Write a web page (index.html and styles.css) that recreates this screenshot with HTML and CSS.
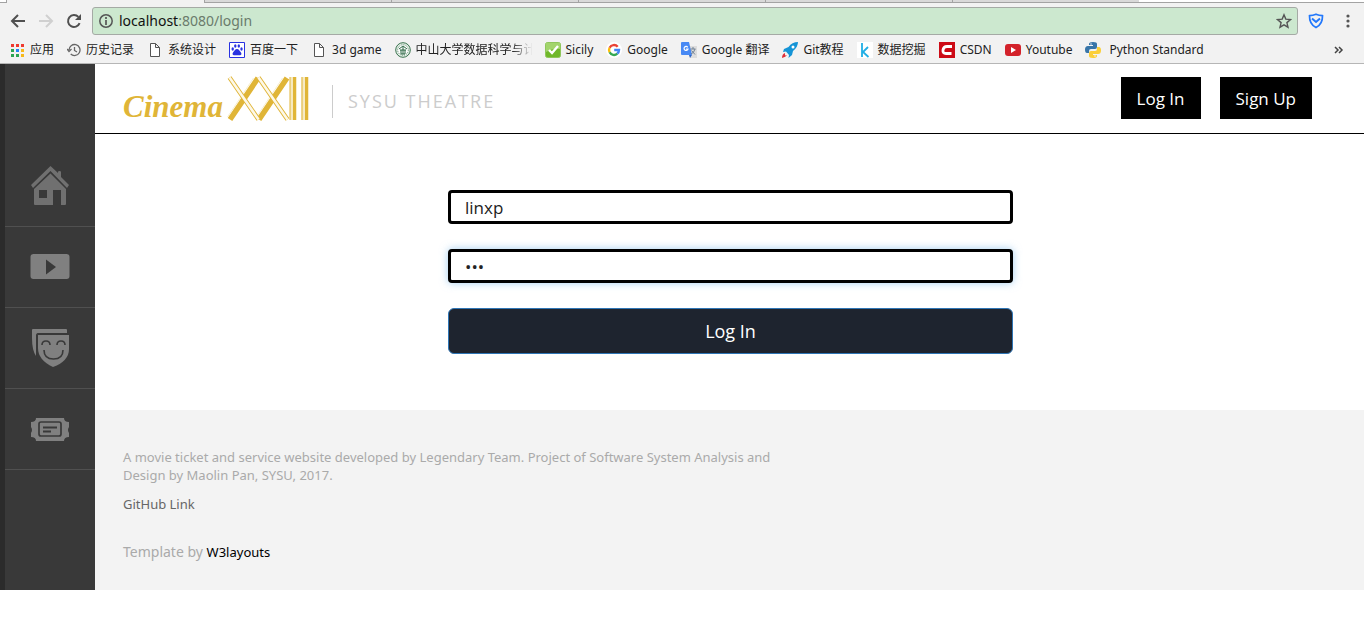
FILE: index.html
```html
<!DOCTYPE html>
<html lang="en">
<head>
<meta charset="utf-8">
<title>Cinema XXII</title>
<link rel="stylesheet" href="styles.css">
</head>
<body>
<div class="browser">
  <div class="tabs"><span class="tab-edge"></span><span class="tab tab-active"></span><span class="tab"></span><span class="tab"></span><span class="tab"></span><span class="tab"></span><span class="tab"></span><span class="tab-rest"></span></div>
  <div class="toolbar">
    <button class="tool" aria-label="Back"><svg width="16" height="16" viewBox="0 0 16 16" fill="none" stroke="#505050" stroke-width="2"><path d="M15 8H2M8 2L2 8l6 6"/></svg></button>
    <button class="tool" aria-label="Forward"><svg width="16" height="16" viewBox="0 0 16 16" fill="none" stroke="#d0d0d0" stroke-width="2"><path d="M1 8h13M8 2l6 6-6 6"/></svg></button>
    <button class="tool" aria-label="Reload"><svg width="16" height="16" viewBox="0 0 16 16"><path d="M13.6 10.2A6 6 0 1 1 12.4 3.9" fill="none" stroke="#505050" stroke-width="2"/><path d="M15 1v6H9z" fill="#505050"/></svg></button>
    <div class="address">
      <svg width="14" height="14" viewBox="0 0 14 14"><circle cx="7" cy="7" r="6.2" fill="none" stroke="#555" stroke-width="1.5"/><path d="M7 6v5M7 3v2" stroke="#555" stroke-width="1.7"/></svg>
      <span class="url"><span class="host">localhost</span>:8080/login</span>
      <svg width="16" height="16" viewBox="0 0 16 16"><path d="M8 1.8l1.8 4.3 4.7.4-3.6 3.1 1.1 4.6L8 11.8l-4 2.4 1.1-4.6L1.500 6.500l4.700-.4z" fill="none" stroke="#555" stroke-width="1.4"/></svg>
    </div>
    <button class="tool shield" aria-label="Shield"><svg width="16" height="16" viewBox="0 0 16 16" fill="none" stroke="#2378fb"><path d="M1.500 2.700Q5 2.500 8 1.200q3 1.300 6.500 1.500.2 8.500-6.500 11.800Q1.300 11.200 1.500 2.700z" stroke-width="1.700"/><path d="M4 5.500L8 9l4-3.500" stroke-width="2"/></svg></button>
    <button class="tool menu" aria-label="Menu"><svg width="16" height="16" viewBox="0 0 16 16" fill="#555"><circle cx="8" cy="3" r="1.600"/><circle cx="8" cy="8" r="1.600"/><circle cx="8" cy="13" r="1.600"/></svg></button>
  </div>
  <nav class="bookmarks" aria-label="Bookmarks">
    <a href="#"><svg width="14" height="14" viewBox="0 0 14 14"><path d="M0 1h3v3H0zM5 1h3v3H5zM10 1h3v3h-3z" fill="#ef3b30"/><path d="M0 6h3v3H0zM0 11h3v3H0zM5 11h3v3H5z" fill="#2da553"/><path d="M5 6h3v3H5z" fill="#2385f8"/><path d="M10 6h3v3h-3zM10 11h3v3h-3z" fill="#f7b91b"/></svg>应用</a>
    <a href="#"><svg width="14" height="14" viewBox="0 0 14 14" fill="none" stroke="#666" stroke-width="1.300"><path d="M2 7a5.500 5.500 0 1 1 1.700 4M0 6l2 2.500L4.500 6M7.500 4v3.500L10 9"/></svg>历史记录</a>
    <a href="#"><svg width="16" height="16" viewBox="0 0 16 16"><path d="M3.500 1.500h5l4 4v9h-9zM8.500 1.500v4h4" fill="#fff" stroke="#555"/></svg>系统设计</a>
    <a href="#"><svg width="16" height="16" viewBox="0 0 16 16"><path d="M.5.500h15v15H.5z" fill="#fff" stroke="#2932e1"/><g fill="#2932e1"><ellipse cx="3.700" cy="7" rx="1.200" ry="1.700"/><ellipse cx="6.300" cy="4" rx="1.200" ry="1.700"/><ellipse cx="9.800" cy="4" rx="1.200" ry="1.700"/><ellipse cx="12.500" cy="7" rx="1.200" ry="1.700"/><path d="M8 7c2 0 2.500 2 4 3.500 1.500 2.500-.7 3.200-4 2.700-3.300.5-5.500-.2-4-2.700C5.500 9 6 7 8 7z"/></g></svg>百度一下</a>
    <a href="#"><svg width="16" height="16" viewBox="0 0 16 16"><path d="M3.500 1.500h5l4 4v9h-9zM8.500 1.500v4h4" fill="#fff" stroke="#555"/></svg>3d game</a>
    <a href="#"><svg width="16" height="16" viewBox="0 0 16 16"><circle cx="8" cy="8" r="7.300" fill="#e5f0e8" stroke="#39724d"/><circle cx="8" cy="8" r="5.300" fill="#fff" stroke="#5d8a6b" stroke-dasharray="1 1"/><path d="M4 7l4-3 4 3M5 8h6M6 8v4h4V8M8 5v7" fill="none" stroke="#286440"/></svg><span class="fade">中山大学数据科学与计</span></a>
    <a href="#"><svg width="16" height="16" viewBox="0 0 16 16"><rect x=".5" y=".5" width="15" height="15" rx="2" fill="#70b82a" stroke="#8fc65b"/><path d="M1 1h14v6Q8 6 1 10z" fill="#a2d46b"/><path d="M4 8l3 3 6-7" fill="none" stroke="#fff" stroke-width="2.400"/></svg>Sicily</a>
    <a href="#"><svg width="16" height="16" viewBox="0 0 16 16"><circle cx="8" cy="8" r="8" fill="#fff"/><g fill="none" stroke-width="2.400"><path d="M11.700 4.700A5 5 0 0 0 3.600 5.700" stroke="#ea4335"/><path d="M3.600 5.700a5 5 0 0 0 0 4.600" stroke="#fbbc05"/><path d="M3.600 10.300a5 5 0 0 0 7.700 1.400" stroke="#34a853"/><path d="M11.300 11.700A5 5 0 0 0 13 8H8.200" stroke="#4285f4"/></g></svg>Google</a>
    <a href="#"><svg width="16" height="16" viewBox="0 0 16 16"><path d="M6 4h10v12H9z" fill="#ddd"/><path d="M1 0h7l3 13H1q-1 0-1-1V1q0-1 1-1z" fill="#4889f4"/><path d="M8 13h3l-2 3z" fill="#3267c5"/><path d="M6.700 5.300A2 2 0 1 0 7 7H5" fill="none" stroke="#fff" stroke-width="1.200"/><path d="M9.500 7h5M12 5v2M14 7q-1 4-4 5M10.500 8.500l3.500 4" fill="none" stroke="#708194"/></svg>Google 翻译</a>
    <a href="#"><svg width="16" height="16" viewBox="0 0 16 16"><path d="M16 0Q10 0 6.500 5L2 7l-1 3 3-.5L7 13l-.5 3L10 13l1-4q5-4 5-9z" fill="#1594d6"/><circle cx="11" cy="5" r="1.500" fill="#fff"/><path d="M3 11q-3 1-3 5 4-1 5-3l-2 .5z" fill="#df3039"/></svg>Git教程</a>
    <a href="#"><svg width="16" height="16" viewBox="0 0 16 16"><path d="M0 0h16v16H0z" fill="#fff"/><path d="M5 1v14M11 5l-5 5 5.500 5" fill="none" stroke="#20aee5" stroke-width="1.800"/></svg>数据挖掘</a>
    <a href="#"><svg width="16" height="16" viewBox="0 0 16 16"><path d="M0 0h16v16H0z" fill="#cd0b16"/><path d="M13 4.500H8Q4.500 4.500 4 8t3 3.500h5.500" fill="none" stroke="#fff" stroke-width="2.800"/></svg>CSDN</a>
    <a href="#"><svg width="16" height="16" viewBox="0 0 16 16"><rect y="2" width="16" height="12" rx="3" fill="#d3222a"/><path d="M6 5l5 3-5 3z" fill="#fff"/></svg>Youtube</a>
    <a href="#" class="wide"><svg width="16" height="16" viewBox="0 0 16 16"><path d="M8 0c3 0 4 .7 4 2v3q0 2-2 2H6Q4 7 4 9v2H2Q0 11 0 7.500T3 4h5V3H4V2q0-2 4-2z" fill="#3875a8"/><path d="M8 16c-3 0-4-.7-4-2v-3q0-2 2-2h4q2 0 2-2V5h2q2 0 2 3.500T13 12H8v1h4v1q0 2-4 2z" fill="#fbcf38"/><circle cx="6" cy="2" r=".7" fill="#fff"/><circle cx="10" cy="14" r=".7" fill="#fff"/></svg>Python Standard</a>
    <button class="more" aria-label="More bookmarks"><svg width="10" height="8" viewBox="0 0 10 8" fill="none" stroke="#444" stroke-width="1.500"><path d="M1 1l3 3-3 3M5 1l3 3-3 3"/></svg></button>
  </nav>
</div>
<div class="site">
  <nav class="sidebar" aria-label="Main">
    <a href="#" aria-label="Home"><svg width="40" height="40" viewBox="0 0 40 40" fill="#707070"><path d="M1 19L20.500 0l7.500 7V6q0-1 1.500-1T31 6v5l8 8-2 3L20.500 5 3 22z"/><path fill-rule="evenodd" d="M4 23L20.500 7.500 36 23v15q0 1-1 1h-4V24h-8v15H5q-1 0-1-1zm5 1v8h8v-8z"/></svg></a>
    <a href="#" aria-label="Videos"><svg width="40" height="40" viewBox="0 0 40 40"><rect x=".5" y="7" width="39" height="25" rx="3" fill="#808080"/><path d="M16 12.500v15l10-7.500z" fill="#393939"/></svg></a>
    <a href="#" aria-label="Theatre"><svg width="40" height="40" viewBox="0 0 40 40" fill="#808080"><path d="M2 2q0-1 1-1h33q1 0 1 1v3H8Q6 5 6 8v20Q2 22 2 10z"/><path d="M8 7h31v14q0 12-16 18Q8 32 8 20z"/><path d="M7 28V8q0-2 2-2h30" fill="none" stroke="#393939" stroke-width="1.500"/><g fill="none" stroke="#393939" stroke-width="1.600"><path d="M12 17q0-4 4-4t4 4M27 17q0-4 4-4t4 4M14 22q0 9 9.500 9t9.500-9"/></g></svg></a>
    <a href="#" aria-label="Tickets"><svg width="40" height="40" viewBox="0 0 40 40"><path d="M6 9h28q0 4 5 4v5q-2 3 0 6v4q-5 0-5 4H6q0-4-5-4v-4q2-3 0-6v-5q5 0 5-4z" fill="#808080"/><rect x="9" y="13" width="22" height="14" rx="2" fill="none" stroke="#393939" stroke-width="1.700"/><path d="M13 18.500h14M13 22.500h8" stroke="#393939" stroke-width="2"/></svg></a>
  </nav>
  <div class="page">
    <header class="header">
      <a href="#" class="logo" aria-label="Cinema XXII">
        <svg width="190" height="52" viewBox="0 0 190 52">
          <text x="0" y="44" class="logo-text">Cinema</text>
          <g stroke="#e0b537" fill="none">
            <path d="M107 46.500L135 5M136 46.500L164 5" stroke-width="5.500"/>
            <path d="M104.500 44l26-39M133.500 44l26-39" stroke="#f8efd0" stroke-width="1"/>
            <path d="M106.500 4.500l29 42M135.500 4.500l29 42" stroke="#e0b537" stroke-width="4.500"/>
            <path d="M106.500 4.500l29 42M135.500 4.500l29 42" stroke="#fdf8e8" stroke-width="2.600"/>
            <path d="M171.500 4v43M183.500 4v43" stroke-width="3.500"/>
            <path d="M168.500 4v43M180 4v43" stroke="#f6e9c0" stroke-width="3"/>
            <path d="M167 4v43M179 4v43" stroke-width="1"/>
          </g>
        </svg>
      </a>
      <span class="tagline">SYSU THEATRE</span>
      <div class="account"><button>Log In</button><button>Sign Up</button></div>
    </header>
    <main class="main">
      <form class="login">
        <input type="text" value="linxp" aria-label="Username">
        <input type="password" value="123" aria-label="Password" class="focused">
        <button type="button">Log In</button>
      </form>
    </main>
    <footer class="footer">
      <p class="about">A movie ticket and service website developed by Legendary Team. Project of Software System Analysis and Design by Maolin Pan, SYSU, 2017.</p>
      <a href="#" class="github">GitHub Link</a>
      <p class="credit">Template by <a href="#">W3layouts</a></p>
    </footer>
  </div>
</div>
</body>
</html>
```
FILE: styles.css
```css
* { box-sizing: border-box; }
body { margin: 0; background: #fff; font-family: "Open Sans", "Noto Sans", sans-serif; }
a { color: inherit; text-decoration: none; }
button { font-family: inherit; border: 0; padding: 0; cursor: pointer; }
svg { display: block; flex: none; }

.browser { background: #f2f2f2; border-bottom: 1px solid #b6b6b6; }
.tabs { display: flex; height: 3px; }
.tab { flex: 0 0 187px; background: #d9d9d9; border-left: 1px solid #a3a3a3; border-bottom: 1px solid #a3a3a3; }
.tab-edge { flex: 0 0 6px; background: #fff; border-bottom: 1px solid #a3a3a3; }
.tab-active { flex-basis: 198px; background: #f2f2f2; border-bottom: 0; }
.tab-rest { flex: 1; background: #fff; border-bottom: 1px solid #a3a3a3; }
.toolbar { display: flex; align-items: center; gap: 12px; padding: 4px 8px 0 10px; }
.tool { background: none; }
.address { flex: 1; display: flex; align-items: center; gap: 6px; height: 28px; padding: 0 5px 0 6px; background: #cce8cf; border: 1px solid #a5aaa5; border-radius: 3px; }
.tool + .address { margin-left: -2px; }
.url { flex: 1; font-family: "Noto Sans", sans-serif; font-size: 14px; line-height: 20px; color: #6a7b6b; }
.host { color: #111; }
.shield { margin-left: -2px; }
.menu { margin-left: 4px; }
.bookmarks { display: flex; align-items: center; gap: 13px; height: 28px; padding: 1px 20px 0 11px; font-family: "Noto Sans", "Noto Sans CJK SC", sans-serif; font-size: 12px; line-height: 18px; color: #222; white-space: nowrap; }
.bookmarks a { display: flex; align-items: center; gap: 5px; }
.bookmarks .wide { gap: 8px; }
.fade { width: 120px; margin-right: -4px; -webkit-mask-image: linear-gradient(to right, #000 80%, transparent 97%); mask-image: linear-gradient(to right, #000 80%, transparent 97%); }
.more { margin-left: auto; background: none; }

.site { display: flex; }
.sidebar { flex: 0 0 95px; padding-top: 82px; background: #393939; border-left: 5px solid #2b2b2b; }
.sidebar a { display: flex; justify-content: center; align-items: center; height: 81px; border-bottom: 1px solid #505050; }
.page { flex: 1; min-width: 0; }

.header { display: flex; align-items: center; height: 70px; padding: 0 52px 0 28px; border-bottom: 1px solid #000; }
.logo-text { font-family: "Liberation Serif", serif; font-style: italic; font-weight: bold; font-size: 31px; fill: #e0b537; }
.tagline { margin: 6px 0 0 19px; padding-left: 15px; border-left: 1px solid #ccc; font-size: 18px; line-height: 33px; letter-spacing: 2px; color: #ccc; }
.account { display: flex; gap: 19px; margin: 0 0 2px auto; }
.account button { padding: 1px 16px 0; background: #000; color: #fff; font-size: 17px; line-height: 41px; }

.main { padding: 56px 0 56px 2px; }
.login { display: flex; flex-direction: column; gap: 25px; width: 565px; max-width: 90%; margin: 0 auto; }
.login input { height: 34px; padding: 0 14px; border: 3px solid #000; border-radius: 4px; outline: 0; background: #fff; color: #222; font-family: inherit; font-size: 17px; }
.login .focused { box-shadow: 0 0 8px rgba(102, 175, 233, .6); }
.login button { height: 46px; border: 1px solid #2e75b5; border-radius: 6px; background: #1e242f; color: #fff; font-size: 18px; }

.footer { padding: 38px 28px 28px; background: #f3f3f3; font-family: "Noto Sans", sans-serif; font-size: 13px; line-height: 18px; color: #aaa; }
.about { max-width: 680px; margin: 0 0 11px; }
.github { color: #666; }
.credit { margin: 29px 0 0; font-size: 14px; line-height: 20px; }
.credit a { font-size: 13px; color: #000; }
```
